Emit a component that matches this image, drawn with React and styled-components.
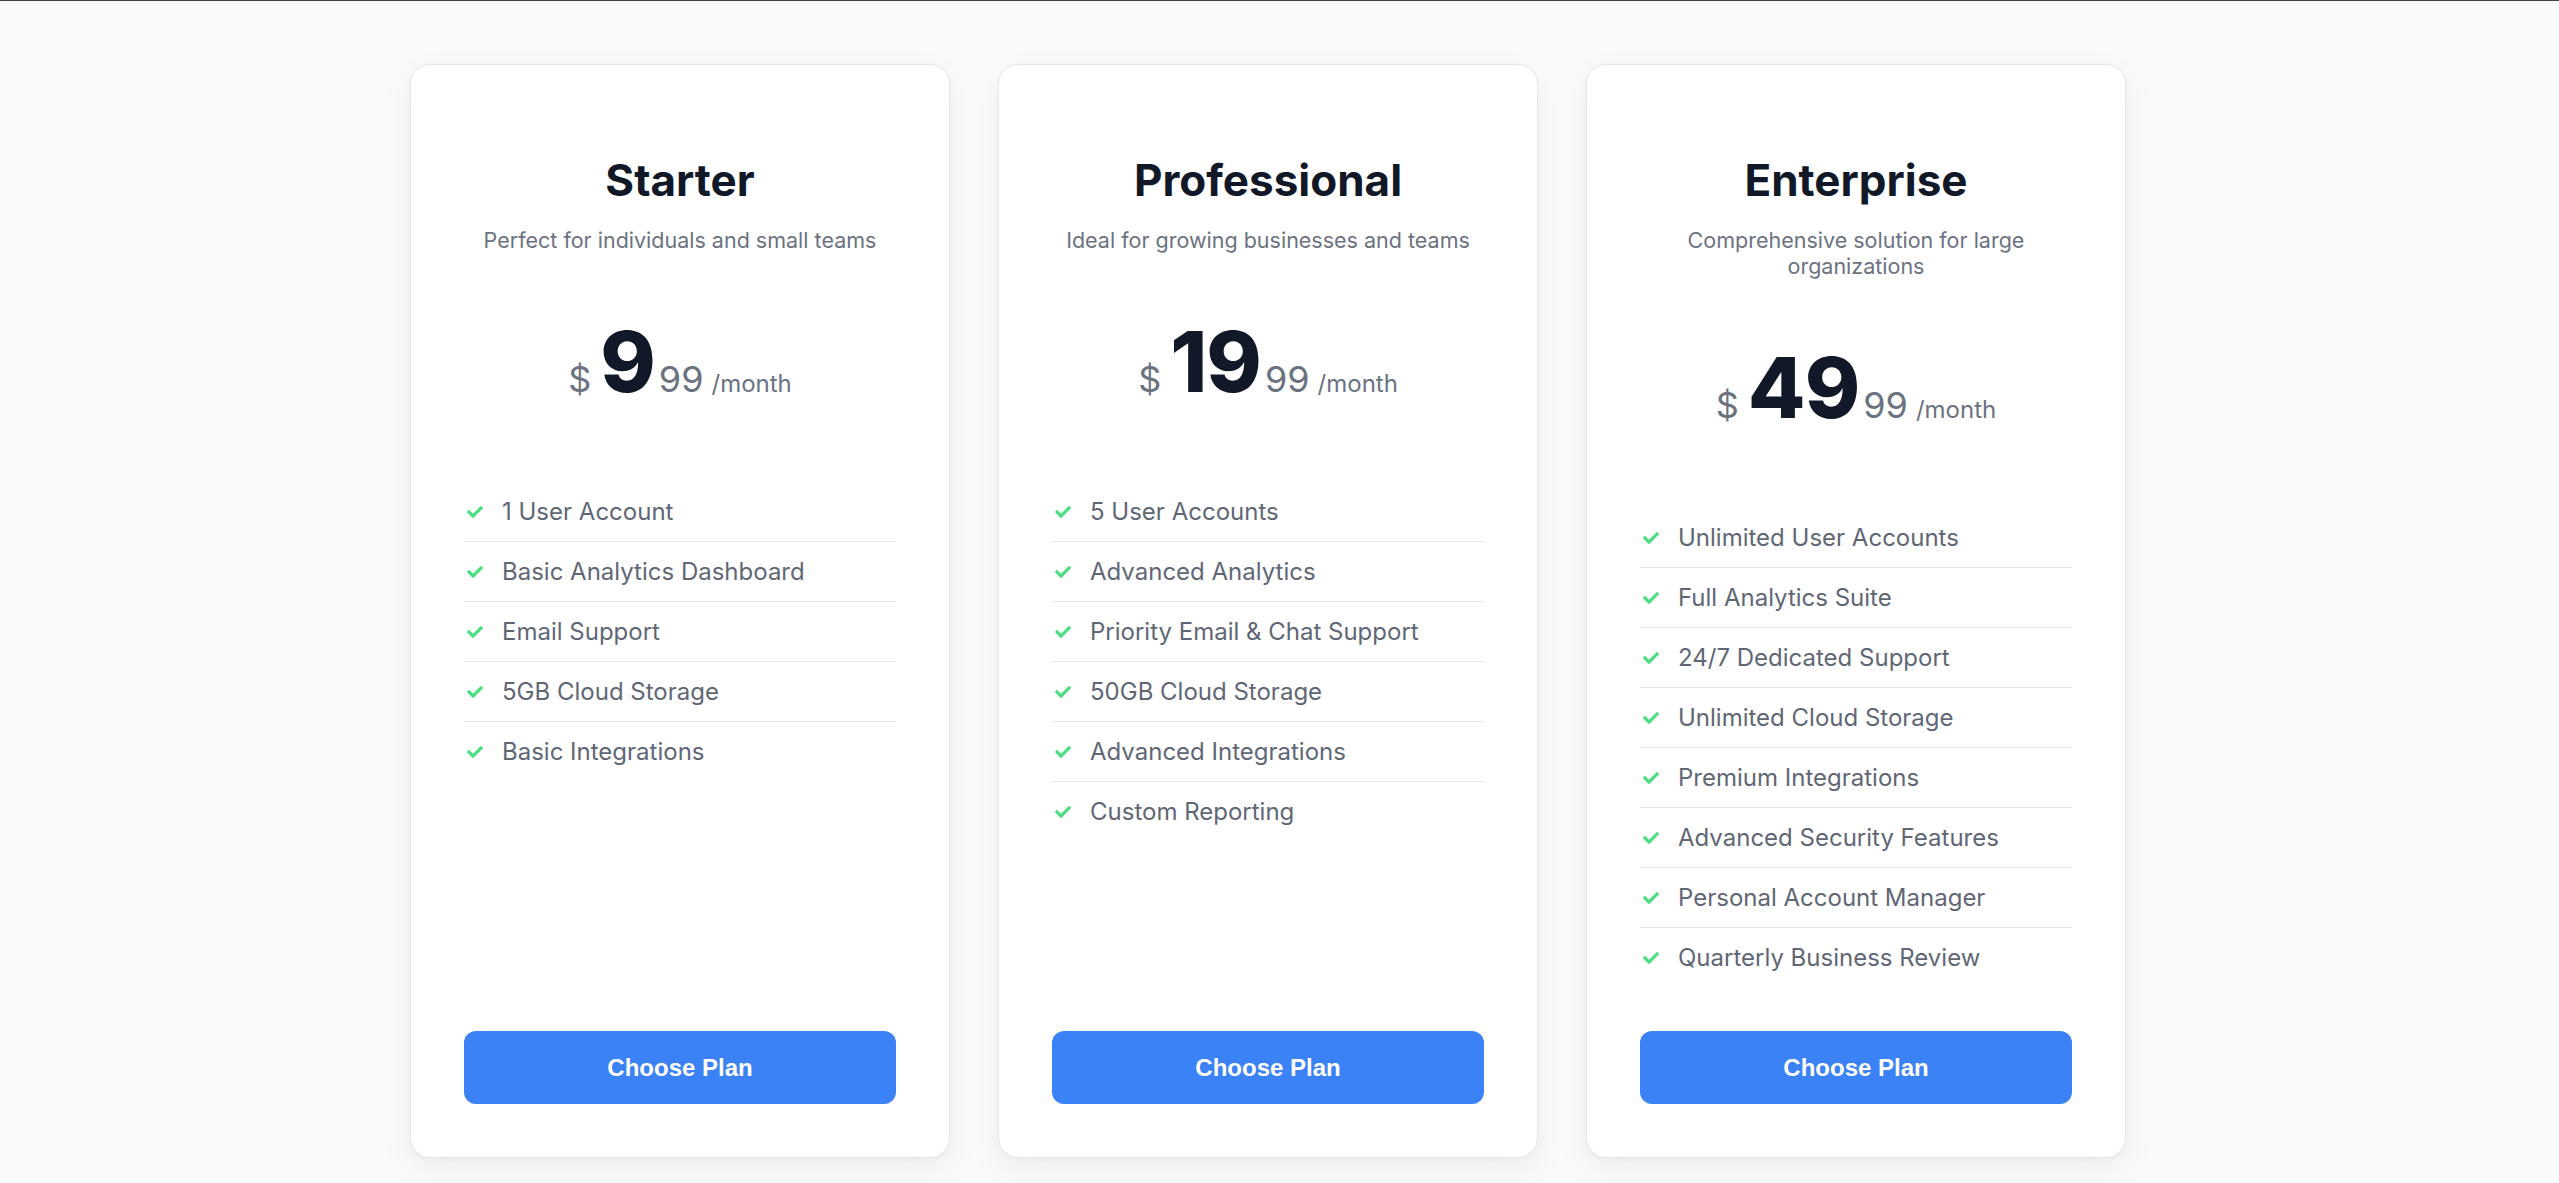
import styled, { createGlobalStyle } from "styled-components";
import { FaCheck } from "react-icons/fa";

const GlobalStyle = createGlobalStyle`
  html {
    border-top: 1px solid #3f3f3f;
    background: #f9fafb;
  }

  body {
    margin: 0;
    background: #f9fafb;
    font-family: Inter, "Noto Sans", sans-serif;
    color: #111827;
  }

  * {
    box-sizing: border-box;
  }
`;

const Page = styled.main`
  display: flex;
  justify-content: center;
  padding: 63px 23px 288px 0;
`;

const Grid = styled.div`
  display: grid;
  grid-template-columns: repeat(3, 540px);
  gap: 48px;
`;

const Card = styled.div`
  display: flex;
  flex-direction: column;
  padding: 53px;
  background: #ffffff;
  border: 1px solid #e5e7eb;
  border-radius: 20px;
  box-shadow: 0 12px 36px rgba(17, 24, 39, 0.05), 0 2px 6px rgba(17, 24, 39, 0.03);
`;

const Header = styled.div`
  display: flex;
  flex-direction: column;
  align-items: center;
  text-align: center;
  padding-top: 33px;
`;

const Title = styled.h2`
  margin: 0;
  font-size: 44px;
  line-height: 58px;
  font-weight: 700;
  color: #111827;
`;

const Subtitle = styled.p`
  margin: 18px 0 0;
  font-size: 21.5px;
  line-height: 26px;
  color: #6b7280;
`;

const Price = styled.div`
  display: flex;
  align-items: baseline;
  justify-content: center;
  margin-top: 67px;
  line-height: 1;
  color: #6b7280;
`;

const Currency = styled.span`
  font-size: 36px;
  margin-right: 9px;
`;

const Amount = styled.span`
  font-size: 84px;
  font-weight: 800;
  color: #111827;
  letter-spacing: -1px;
`;

const Cents = styled.span`
  font-size: 36px;
  margin-left: 4px;
`;

const Period = styled.span`
  font-size: 24px;
  margin-left: 8px;
`;

const Features = styled.ul`
  list-style: none;
  margin: 78px 0 44px;
  padding: 0;
`;

const Feature = styled.li`
  display: flex;
  align-items: center;
  padding: 13px 0;
  font-size: 24px;
  line-height: 33px;
  color: #5f6775;
  border-bottom: 1px solid #e5e7eb;

  &:last-child {
    border-bottom: none;
  }
`;

const CheckIcon = styled.span`
  display: flex;
  justify-content: center;
  width: 22px;
  margin-right: 16px;
  color: #4ade80;
`;

const ChooseButton = styled.button`
  margin-top: auto;
  height: 73px;
  border: none;
  border-radius: 12px;
  background: #3b82f6;
  color: #ffffff;
  font-family: "Liberation Sans", Arial, sans-serif;
  font-size: 24px;
  font-weight: 700;
  cursor: pointer;

  &:hover {
    background: #2563eb;
  }
`;

const plans = [
  {
    name: "Starter",
    desc: "Perfect for individuals and small teams",
    price: "9",
    features: [
      "1 User Account",
      "Basic Analytics Dashboard",
      "Email Support",
      "5GB Cloud Storage",
      "Basic Integrations",
    ],
  },
  {
    name: "Professional",
    desc: "Ideal for growing businesses and teams",
    price: "19",
    features: [
      "5 User Accounts",
      "Advanced Analytics",
      "Priority Email & Chat Support",
      "50GB Cloud Storage",
      "Advanced Integrations",
      "Custom Reporting",
    ],
  },
  {
    name: "Enterprise",
    desc: "Comprehensive solution for large organizations",
    price: "49",
    features: [
      "Unlimited User Accounts",
      "Full Analytics Suite",
      "24/7 Dedicated Support",
      "Unlimited Cloud Storage",
      "Premium Integrations",
      "Advanced Security Features",
      "Personal Account Manager",
      "Quarterly Business Review",
    ],
  },
];

const PlanCard = ({ plan }) => (
  <Card>
    <Header>
      <Title>{plan.name}</Title>
      <Subtitle>{plan.desc}</Subtitle>
    </Header>
    <Price>
      <Currency>$</Currency>
      <Amount>{plan.price}</Amount>
      <Cents>99</Cents>
      <Period>/month</Period>
    </Price>
    <Features>
      {plan.features.map((f) => (
        <Feature key={f}>
          <CheckIcon>
            <FaCheck size={16} />
          </CheckIcon>
          {f}
        </Feature>
      ))}
    </Features>
    <ChooseButton>Choose Plan</ChooseButton>
  </Card>
);

export default function App() {
  return (
    <>
      <GlobalStyle />
      <Page>
        <Grid>
          {plans.map((p) => (
            <PlanCard key={p.name} plan={p} />
          ))}
        </Grid>
      </Page>
    </>
  );
}
